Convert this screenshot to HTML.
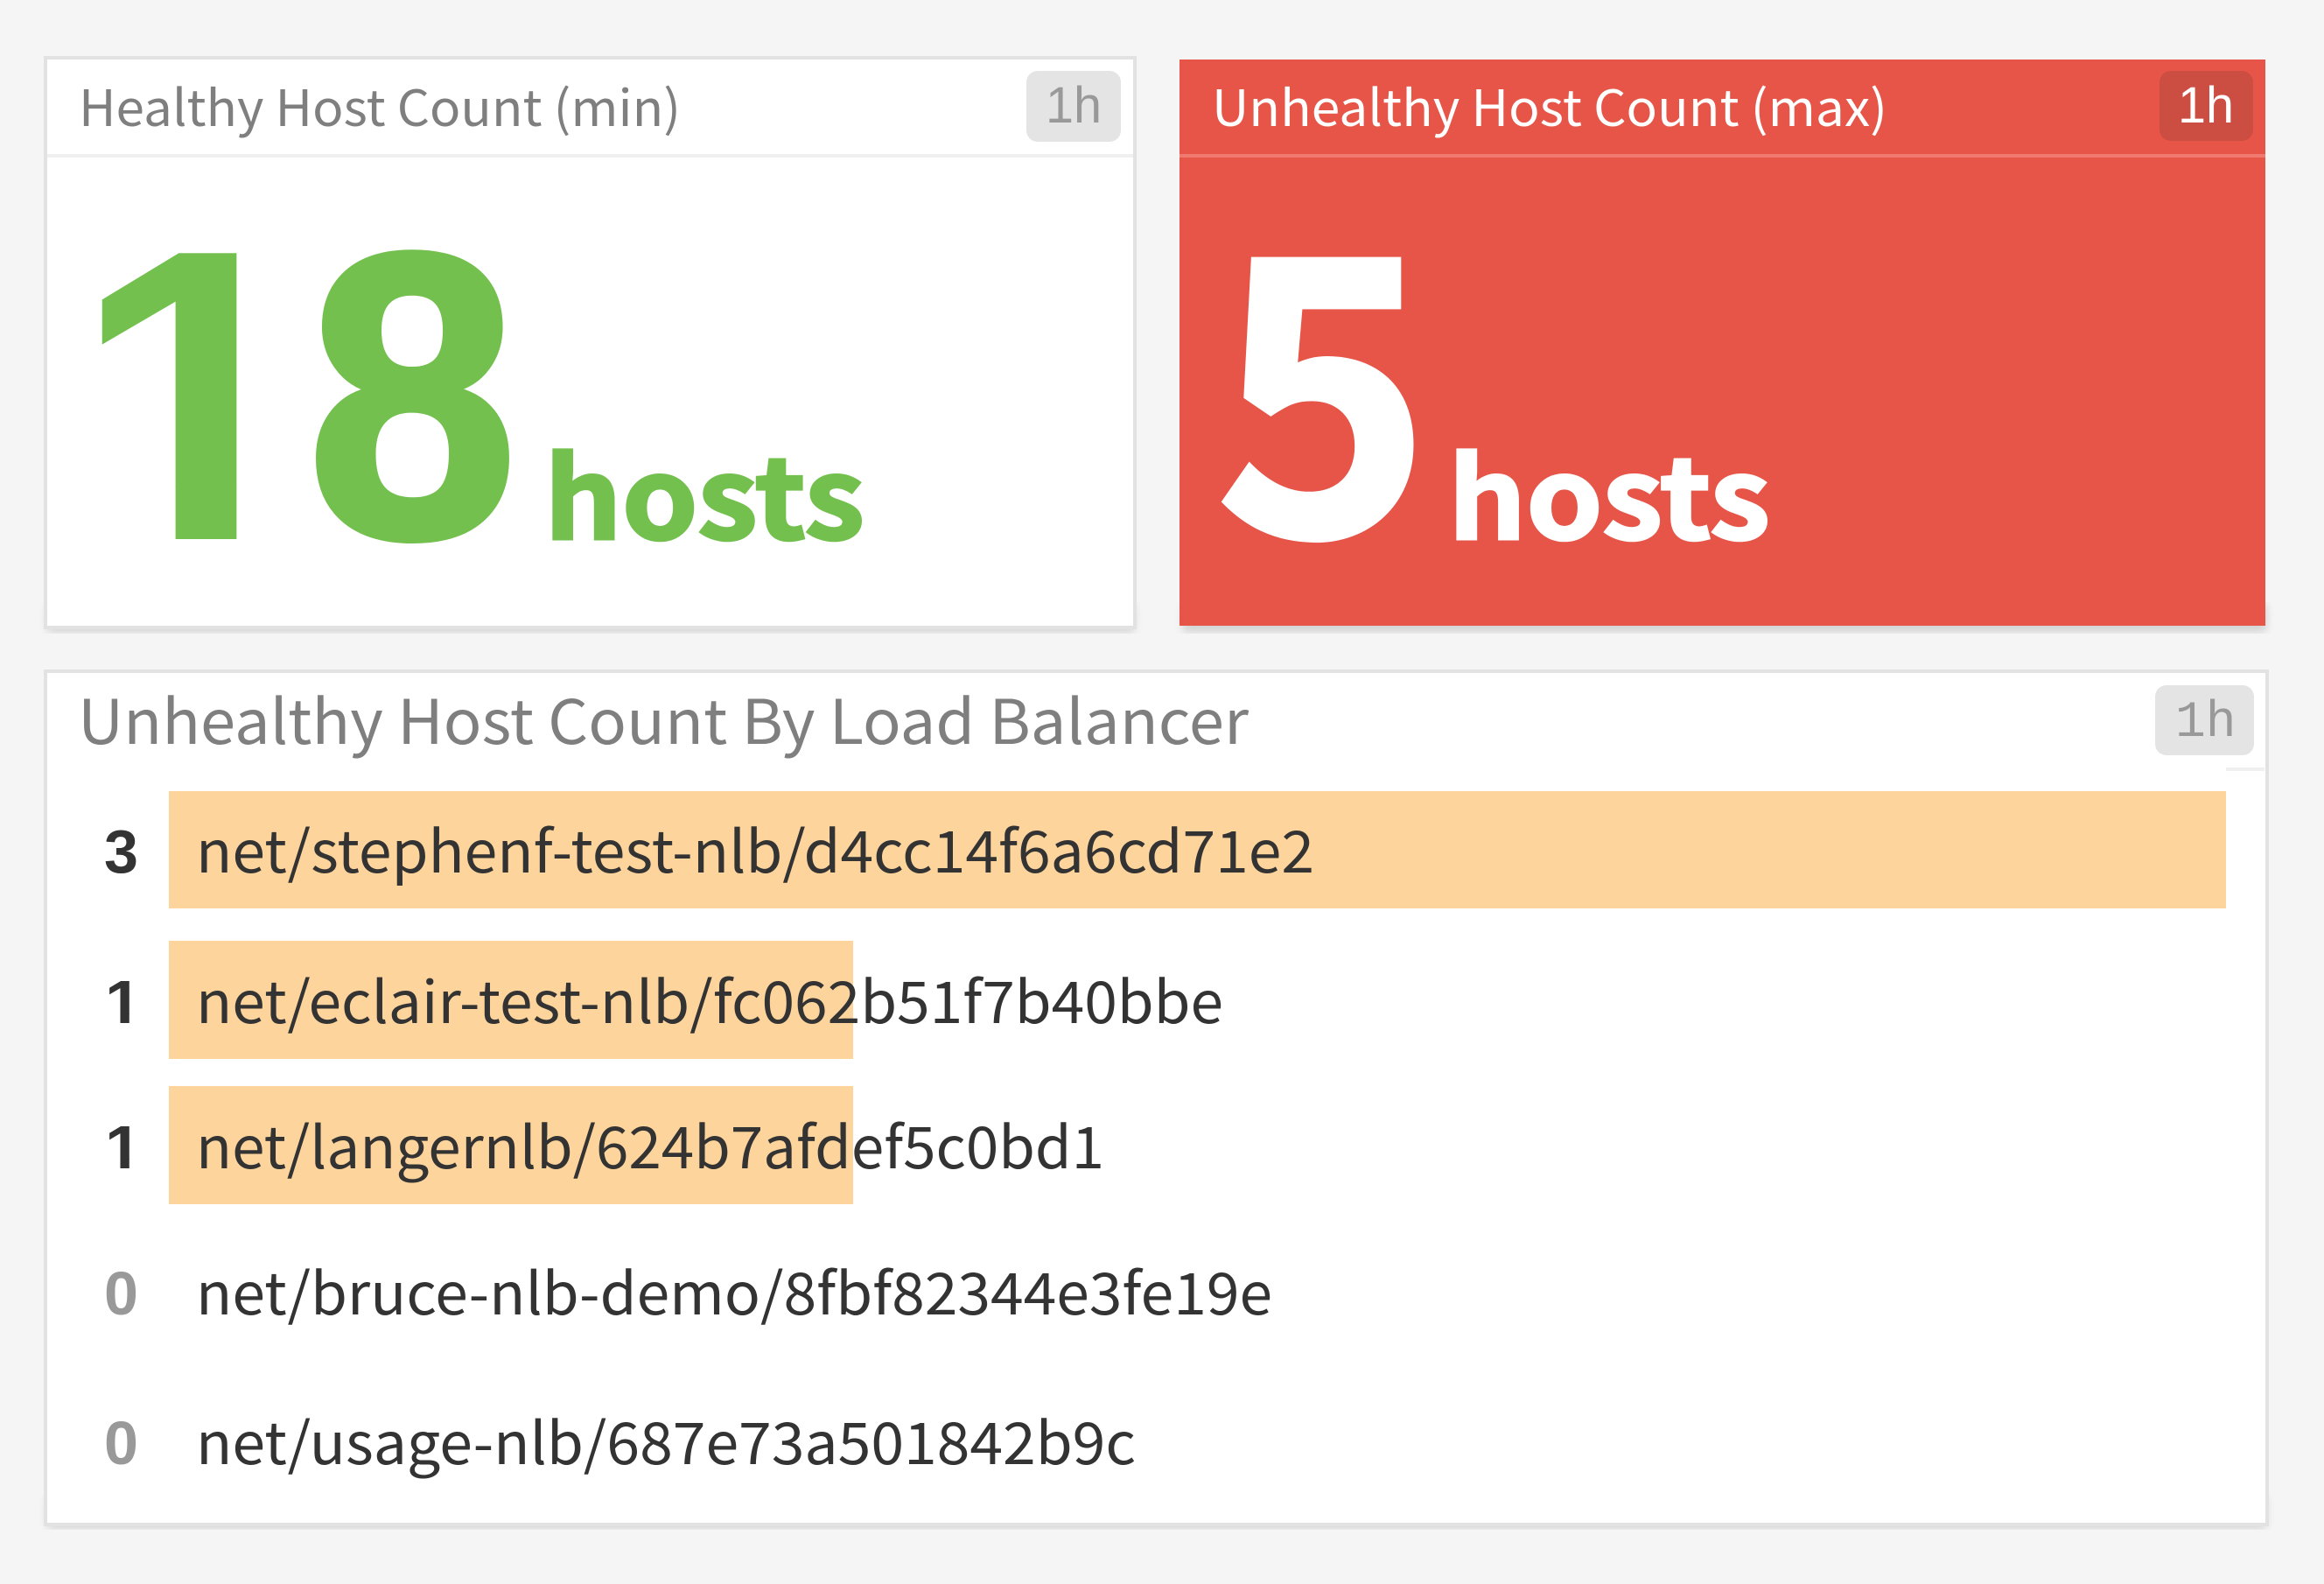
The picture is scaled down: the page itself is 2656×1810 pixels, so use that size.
<!DOCTYPE html>
<html><head><meta charset="utf-8"><style>
html,body{margin:0;padding:0;width:2656px;height:1810px;background:#f5f5f5;overflow:hidden}
svg{display:block}
text{font-family:"Liberation Sans","Noto Sans CJK SC",sans-serif}
.n{font-family:"Noto Sans CJK SC","Liberation Sans",sans-serif}
.g{fill:#7f7f7f}
.r{fill:#333;font-size:66px}
.v{font-weight:700;font-size:70px}
.b{font-weight:700}
</style></head><body>
<svg width="2656" height="1810" viewBox="0 0 2656 1810" xmlns="http://www.w3.org/2000/svg">
<defs>
<filter id="s" x="-5%" y="-5%" width="110%" height="110%"><feGaussianBlur stdDeviation="5"/></filter>
<clipPath id="c1"><rect x="60" y="200" width="240" height="356"/></clipPath>
<clipPath id="c2"><rect x="195" y="555" width="81" height="61"/></clipPath>
<clipPath id="r2a"><rect x="100" y="1100" width="70" height="59"/></clipPath>
<clipPath id="r2b"><rect x="133" y="1158" width="20" height="11"/></clipPath>
<clipPath id="r3a"><rect x="100" y="1266" width="70" height="59"/></clipPath>
<clipPath id="r3b"><rect x="133" y="1324" width="20" height="11"/></clipPath>
</defs>
<rect width="2656" height="1810" fill="#f5f5f5"/>
<!-- panel shadows -->
<rect x="54" y="690" width="1242" height="32" fill="#000" opacity=".14" filter="url(#s)"/>
<rect x="1352" y="690" width="1238" height="32" fill="#000" opacity=".14" filter="url(#s)"/>
<rect x="54" y="1710" width="2536" height="36" fill="#000" opacity=".14" filter="url(#s)"/>
<!-- panel 1 -->
<rect x="50" y="64" width="1249" height="655" fill="#e2e2e2"/>
<rect x="54" y="68" width="1241" height="647" fill="#fff"/>
<rect x="54" y="176" width="1241" height="4" fill="#f0f0f0"/>
<text class="n g" x="90" y="144" font-size="57" textLength="688" lengthAdjust="spacingAndGlyphs">Healthy Host Count (min)</text>
<rect x="1173" y="81" width="108" height="81" rx="13" fill="#e4e4e4"/>
<text x="1195" y="140" font-size="58" fill="#999" textLength="64" lengthAdjust="spacingAndGlyphs">1h</text>
<g clip-path="url(#c1)"><text class="b" transform="translate(82,616) scale(1.07,1)" font-size="475" fill="#73c04e">1</text></g>
<g clip-path="url(#c2)"><text class="b" transform="translate(82,676) scale(1.07,1)" font-size="475" fill="#73c04e" aria-hidden="true">1</text></g>
<text class="b" transform="translate(351,612.5) scale(.934,1)" font-size="463" fill="#73c04e" stroke="#73c04e" stroke-width="8">8</text>
<text class="n b" x="622" y="616" font-size="128" fill="#73c04e" stroke="#73c04e" stroke-width="3" textLength="366" lengthAdjust="spacingAndGlyphs">hosts</text>
<!-- panel 2 -->
<rect x="1348" y="68" width="1241" height="647" fill="#e65548"/>
<rect x="1348" y="176" width="1241" height="4" fill="#f07a70"/>
<text class="n" x="1385" y="144" font-size="57" fill="#fff" textLength="772" lengthAdjust="spacingAndGlyphs">Unhealthy Host Count (max)</text>
<rect x="2468" y="81" width="107" height="80" rx="13" fill="#cc4d41"/>
<text x="2489" y="140" font-size="58" fill="#fff" textLength="64" lengthAdjust="spacingAndGlyphs">1h</text>
<text class="n b" transform="translate(1388.7,611) scale(.96,1)" font-size="436" fill="#fff" stroke="#fff" stroke-width="6">5</text>
<text class="n b" x="1655" y="616" font-size="128" fill="#fff" stroke="#fff" stroke-width="3" textLength="368" lengthAdjust="spacingAndGlyphs">hosts</text>
<!-- panel 3 -->
<rect x="50" y="765" width="2543" height="979" fill="#e2e2e2"/>
<rect x="54" y="769" width="2535" height="971" fill="#fff"/>
<rect x="2544" y="877" width="44" height="4" fill="#f0f0f0"/>
<text class="n g" x="89" y="850" font-size="70" textLength="1338" lengthAdjust="spacingAndGlyphs">Unhealthy Host Count By Load Balancer</text>
<rect x="2463" y="783" width="113" height="80" rx="13" fill="#e4e4e4"/>
<text x="2486" y="841" font-size="58" fill="#999" style="font-family:'Liberation Mono',monospace">1h</text>
<rect x="193" y="904" width="2351" height="134" fill="#fdd49b"/>
<rect x="193" y="1075" width="782" height="135" fill="#fdd49b"/>
<rect x="193" y="1241" width="782" height="135" fill="#fdd49b"/>
<text class="n r" x="224" y="997" textLength="1278" lengthAdjust="spacingAndGlyphs">net/stephenf-test-nlb/d4cc14f6a6cd71e2</text>
<text class="n r" x="224" y="1169" textLength="1174" lengthAdjust="spacingAndGlyphs">net/eclair-test-nlb/fc062b51f7b40bbe</text>
<text class="n r" x="224" y="1335" textLength="1038" lengthAdjust="spacingAndGlyphs">net/langernlb/624b7afdef5c0bd1</text>
<text class="n r" x="224" y="1502" textLength="1230" lengthAdjust="spacingAndGlyphs">net/bruce-nlb-demo/8fbf82344e3fe19e</text>
<text class="n r" x="224" y="1673" textLength="1074" lengthAdjust="spacingAndGlyphs">net/usage-nlb/687e73a501842b9c</text>
<text class="v" x="119" y="997" fill="#333">3</text>
<g clip-path="url(#r2a)"><text class="v" transform="translate(120,1169) scale(1.07,1)" fill="#333">1</text></g>
<g clip-path="url(#r2b)"><text class="v" transform="translate(120,1179) scale(1.07,1)" fill="#333" aria-hidden="true">1</text></g>
<g clip-path="url(#r3a)"><text class="v" transform="translate(120,1335) scale(1.07,1)" fill="#333">1</text></g>
<g clip-path="url(#r3b)"><text class="v" transform="translate(120,1345) scale(1.07,1)" fill="#333" aria-hidden="true">1</text></g>
<text class="v" x="119" y="1502" fill="#999">0</text>
<text class="v" x="119" y="1673" fill="#999">0</text>
</svg>
</body></html>
